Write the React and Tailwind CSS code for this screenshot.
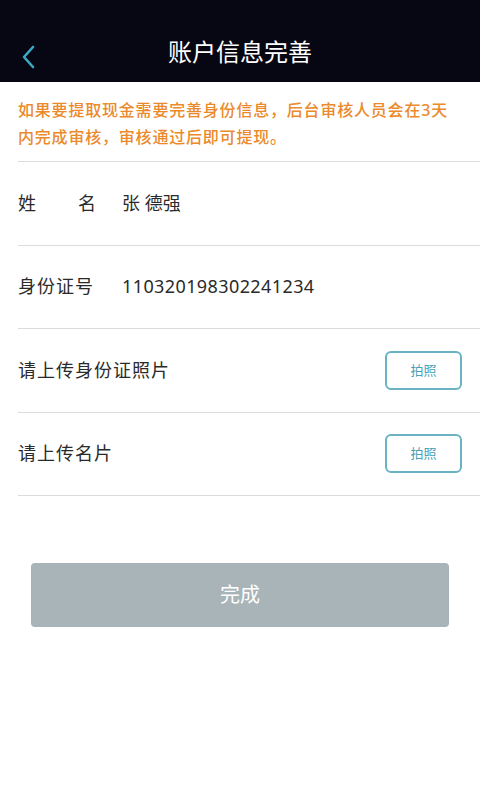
export default function App() {
  const font = { fontFamily: '"Noto Sans", "Noto Sans CJK SC", sans-serif' };

  return (
    <div className="min-h-screen w-[480px] bg-white" style={font}>
      {/* 顶栏 */}
      <header className="relative flex h-[82px] items-end justify-center bg-[#070714] pb-[12px]">
        <button className="absolute left-[16px] top-[40px] p-1">
          <svg width="16" height="26" viewBox="0 0 16 26" fill="none">
            <path d="M13 3 L4 13 L13 23" stroke="#3aa9c4" strokeWidth="2.6" strokeLinecap="round" strokeLinejoin="round" />
          </svg>
        </button>
        <h1 className="text-[24px] leading-[36px] text-white">账户信息完善</h1>
      </header>

      {/* 提示 */}
      <div className="pl-[18px] pt-[15px] pb-[10px]">
        <p className="whitespace-nowrap text-[16px] font-medium leading-[27px] tracking-[0.8px] text-[#ea8a2c]">
          如果要提取现金需要完善身份信息，后台审核人员会在3天
          <br />
          内完成审核，审核通过后即可提现。
        </p>
      </div>

      <div className="ml-[18px] border-b border-[#dcdcdc]">
        <Row>
          <span className="flex w-[104px] justify-between pr-[26px]">
            <span>姓</span>
            <span>名</span>
          </span>
          <span>张 德强</span>
        </Row>
        <Row>
          <span className="w-[104px] tracking-[1px]">身份证号</span>
          <span className="tracking-[0.4px]">110320198302241234</span>
        </Row>
        <Row>
          <span className="flex-1 tracking-[1px]">请上传身份证照片</span>
          <PhotoBtn />
        </Row>
        <Row>
          <span className="flex-1 tracking-[1px]">请上传名片</span>
          <PhotoBtn />
        </Row>
      </div>

      <div className="px-[31px] pt-[67px]">
        <button className="flex h-[64px] w-full items-center justify-center rounded-[4px] bg-[#a8b4b8] text-[20px] text-white">
          完成
        </button>
      </div>
    </div>
  );
}

function Row({ children }) {
  return (
    <div className="flex h-[83.5px] items-center border-t border-[#dcdcdc] pr-[18px] text-[18px] text-[#2a2a2a]">
      {children}
    </div>
  );
}

function PhotoBtn() {
  return (
    <button className="h-[39px] w-[77px] rounded-[6px] border-2 border-[#69b3c4] text-[13px] text-[#4a9fb8]">
      拍照
    </button>
  );
}
